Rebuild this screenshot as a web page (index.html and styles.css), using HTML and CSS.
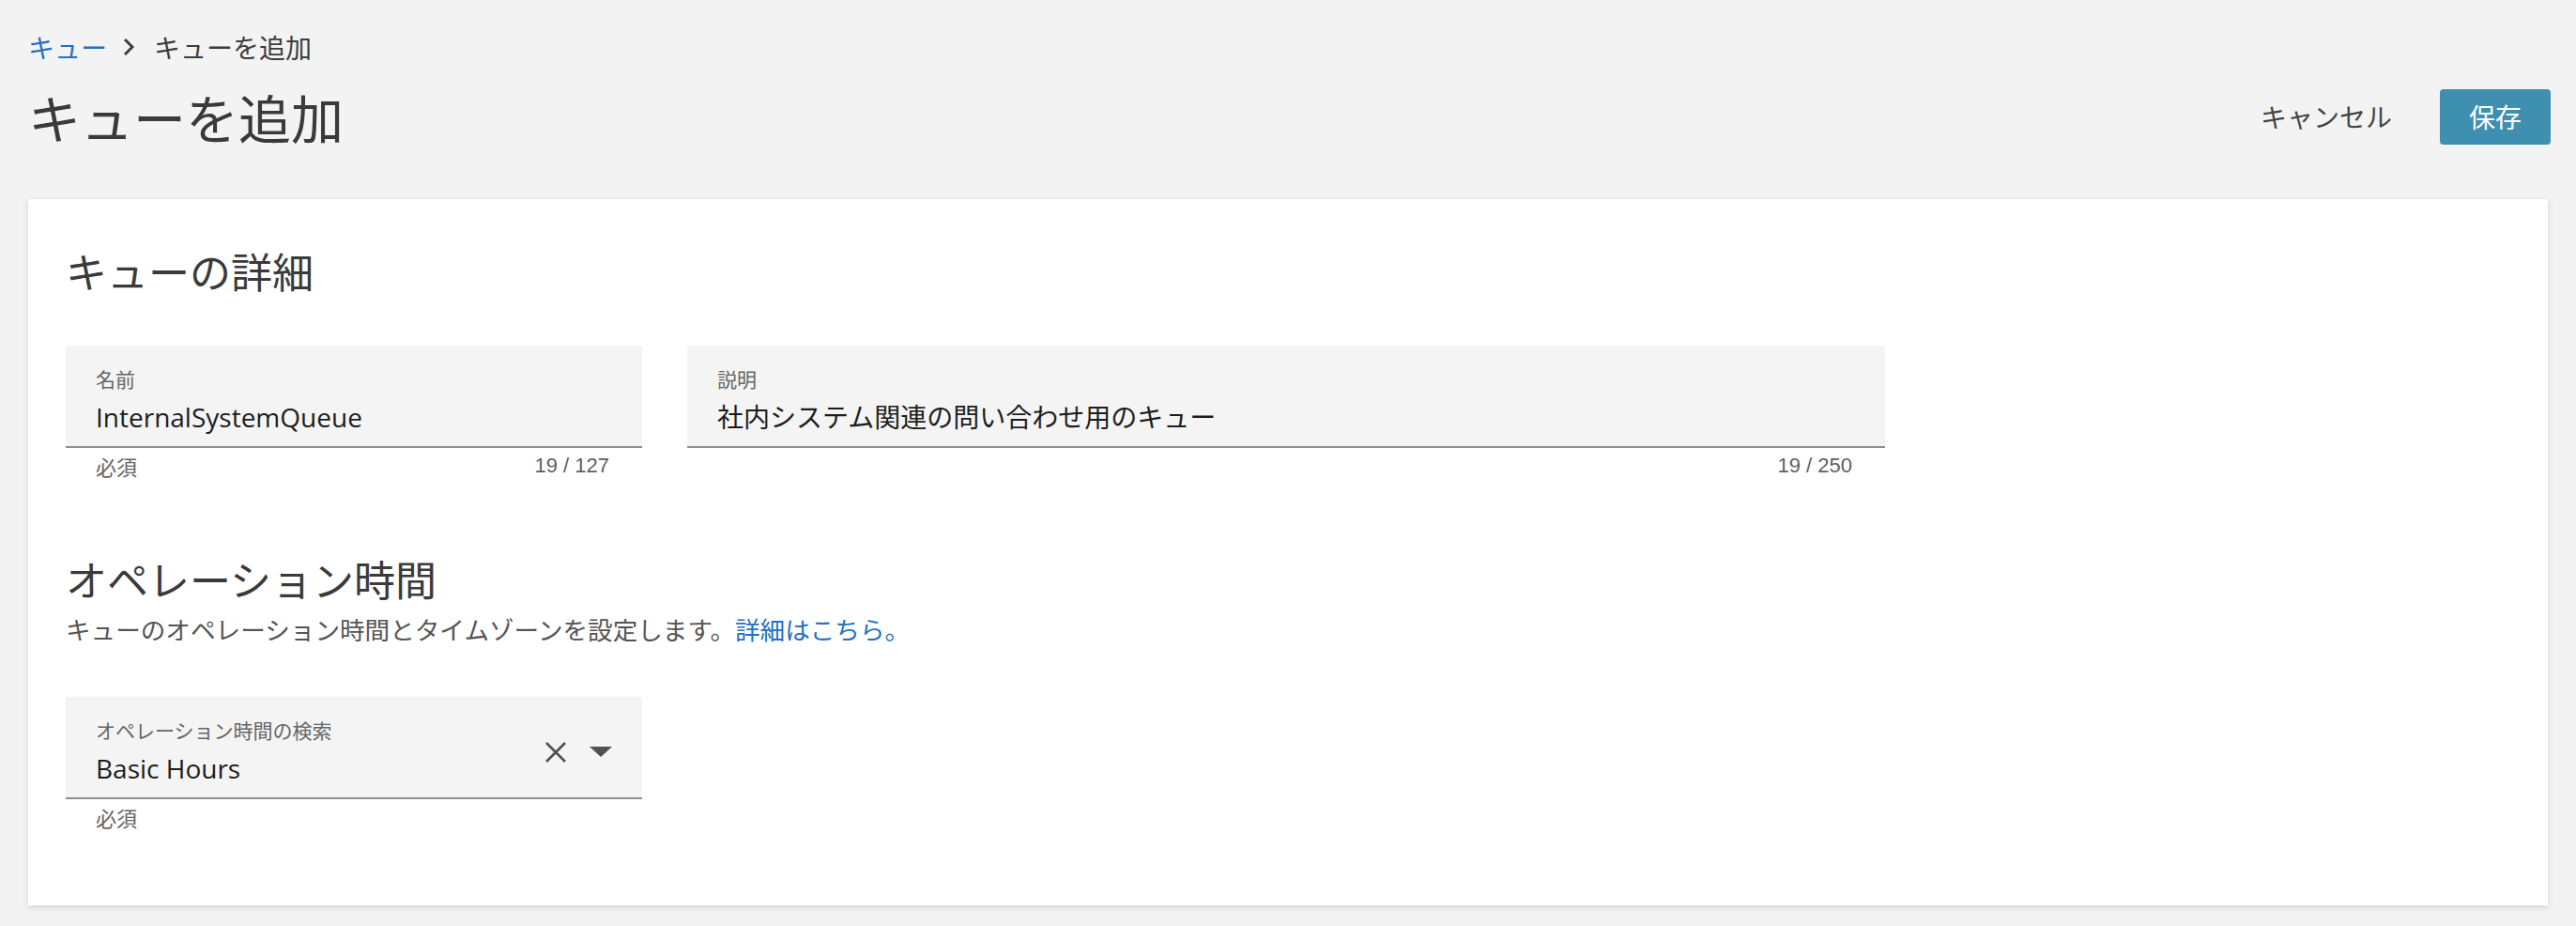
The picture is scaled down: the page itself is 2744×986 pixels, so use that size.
FILE: index.html
```html
<!DOCTYPE html>
<html lang="ja">
<head>
<meta charset="utf-8">
<title>キューを追加</title>
<link rel="stylesheet" href="styles.css">
</head>
<body>
<div class="page">
  <nav class="crumbs">
    <a class="crumb-link" href="#">キュー</a>
    <svg class="crumb-sep" width="12" height="20" viewBox="0 0 12 20"><path d="M2 2 L10 10 L2 18" fill="none" stroke="#3d3d3d" stroke-width="3"/></svg>
    <span class="crumb-current">キューを追加</span>
  </nav>

  <header class="head">
    <h1 class="title">キューを追加</h1>
    <div class="actions">
      <button class="btn-text" type="button">キャンセル</button>
      <button class="btn-primary" type="button">保存</button>
    </div>
  </header>

  <section class="card">
    <h2 class="card-title">キューの詳細</h2>
    <div class="row">
      <div class="field-wrap name">
        <div class="field">
          <div class="field-label">名前</div>
          <div class="field-value">InternalSystemQueue</div>
        </div>
        <div class="helper"><span>必須</span><span class="count">19 / 127</span></div>
      </div>
      <div class="field-wrap desc">
        <div class="field">
          <div class="field-label">説明</div>
          <div class="field-value">社内システム関連の問い合わせ用のキュー</div>
        </div>
        <div class="helper"><span></span><span class="count">19 / 250</span></div>
      </div>
    </div>

    <h2 class="card-title section">オペレーション時間</h2>
    <p class="desc-text">キューのオペレーション時間とタイムゾーンを設定します。<a class="link" href="#">詳細はこちら。</a></p>

    <div class="field-wrap select">
      <div class="field select-field">
        <div class="select-text">
          <div class="field-label">オペレーション時間の検索</div>
          <div class="field-value">Basic Hours</div>
        </div>
        <div class="select-icons">
          <svg width="24" height="24" viewBox="0 0 24 24"><path d="M2 2 L22 22 M22 2 L2 22" stroke="#505050" stroke-width="2.6" fill="none"/></svg>
          <svg width="24" height="12" viewBox="0 0 24 12"><path d="M0 0 H24 L12 11 Z" fill="#505050"/></svg>
        </div>
      </div>
      <div class="helper"><span>必須</span></div>
    </div>
  </section>
</div>
</body>
</html>
```

FILE: styles.css
```css
html, body {
  margin: 0;
  padding: 0;
}

body {
  background: #f3f3f3;
  font-family: "Open Sans", "Noto Sans CJK JP", sans-serif;
  color: #3d3d3d;
}

.page {
  padding: 30px 27px 20px 30px;
}

/* breadcrumb */
.crumbs {
  display: flex;
  align-items: center;
  height: 40px;
  font-size: 28px;
  line-height: 40px;
  font-family: "Noto Sans CJK JP", sans-serif;
}

.crumb-link {
  color: #2470c2;
  text-decoration: none;
}

.crumb-sep {
  margin: 0 21px 0 17px;
}

.crumb-current {
  color: #3d3d3d;
}

/* page header */
.head {
  display: flex;
  align-items: center;
  justify-content: space-between;
  margin-top: 18px;
  height: 72px;
}

.title {
  margin: 0;
  font-size: 56px;
  line-height: 72px;
  font-weight: 400;
  color: #3a3a3a;
  font-family: "Noto Sans CJK JP", sans-serif;
}

.actions {
  display: flex;
  align-items: center;
  gap: 35px;
}

.btn-text {
  background: none;
  border: 0;
  padding: 0 16px;
  font: 400 28px/40px "Noto Sans CJK JP", sans-serif;
  color: #444;
}

.btn-primary {
  height: 59px;
  padding: 0 31px;
  background: #3f8fb0;
  border: 0;
  border-radius: 4px;
  color: #fff;
  font: 400 28px/40px "Noto Sans CJK JP", sans-serif;
}

/* card */
.card {
  margin: 52px 3px 0 0;
  background: #fff;
  padding: 48px 40px 79px;
  box-shadow: 0 2px 6px rgba(0, 0, 0, 0.14);
}

.card-title {
  margin: 0;
  font-size: 44px;
  line-height: 56px;
  font-weight: 400;
  color: #3a3a3a;
  font-family: "Noto Sans CJK JP", sans-serif;
}

.card-title.section {
  margin-top: 77px;
}

.row {
  display: flex;
  gap: 48px;
  margin-top: 52px;
}

.field-wrap.name,
.field-wrap.select {
  width: 614px;
}

.field-wrap.desc {
  width: 1276px;
}

.field {
  box-sizing: border-box;
  height: 109px;
  background: #f4f4f4;
  border-bottom: 2px solid #8d8d8d;
  padding: 21px 32px 11px;
}

.field-label {
  font-size: 21px;
  line-height: 28px;
  color: #666;
  margin-bottom: 7px;
  font-family: "Noto Sans CJK JP", sans-serif;
}

.field-value {
  font-size: 28px;
  line-height: 40px;
  color: #1d1d1d;
  white-space: nowrap;
}

.helper {
  display: flex;
  justify-content: space-between;
  padding: 4px 35px 0 32px;
  height: 30px;
  font-size: 22px;
  line-height: 30px;
  color: #666;
  font-family: "Noto Sans CJK JP", sans-serif;
}

.count {
  font-family: "Liberation Sans", sans-serif;
  font-size: 22px;
  color: #5f5f5f;
}

.desc-text {
  margin: 8px 0 0;
  font-size: 26.6px;
  line-height: 36px;
  color: #555;
  font-family: "Noto Sans CJK JP", sans-serif;
}

.link {
  color: #2470c2;
  text-decoration: none;
}

.field-wrap.select {
  margin-top: 54px;
}

.select-field {
  display: flex;
  align-items: center;
  justify-content: space-between;
  padding-right: 32px;
}

.select-text {
  align-self: flex-start;
}

.select-icons {
  display: flex;
  align-items: center;
  gap: 24px;
}

.select-icons svg {
  display: block;
}
```
